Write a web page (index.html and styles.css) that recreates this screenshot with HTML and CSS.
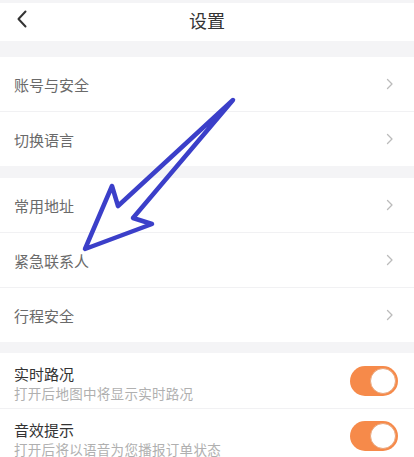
FILE: index.html
```html
<!DOCTYPE html>
<html lang="zh">
<head>
<meta charset="utf-8">
<title>设置</title>
<link rel="stylesheet" href="styles.css">
</head>
<body>
<div class="page">
  <header class="header">
    <svg class="back" width="12" height="18" viewBox="0 0 12 18"><path d="M9.5 1.5 L2.5 9 L9.5 16.5" fill="none" stroke="#333" stroke-width="2" stroke-linecap="round" stroke-linejoin="round"/></svg>
    <h1 class="title">设置</h1>
  </header>

  <section class="group g1">
    <div class="row"><span class="label">账号与安全</span><svg class="chev" width="8" height="12" viewBox="0 0 8 12"><path d="M1.5 1.5 L6 6 L1.5 10.5" fill="none" stroke="#bbb" stroke-width="1.3" stroke-linecap="round" stroke-linejoin="round"/></svg></div>
    <div class="row"><span class="label">切换语言</span><svg class="chev" width="8" height="12" viewBox="0 0 8 12"><path d="M1.5 1.5 L6 6 L1.5 10.5" fill="none" stroke="#bbb" stroke-width="1.3" stroke-linecap="round" stroke-linejoin="round"/></svg></div>
  </section>

  <section class="group g2">
    <div class="row"><span class="label">常用地址</span><svg class="chev" width="8" height="12" viewBox="0 0 8 12"><path d="M1.5 1.5 L6 6 L1.5 10.5" fill="none" stroke="#bbb" stroke-width="1.3" stroke-linecap="round" stroke-linejoin="round"/></svg></div>
    <div class="row"><span class="label">紧急联系人</span><svg class="chev" width="8" height="12" viewBox="0 0 8 12"><path d="M1.5 1.5 L6 6 L1.5 10.5" fill="none" stroke="#bbb" stroke-width="1.3" stroke-linecap="round" stroke-linejoin="round"/></svg></div>
    <div class="row"><span class="label">行程安全</span><svg class="chev" width="8" height="12" viewBox="0 0 8 12"><path d="M1.5 1.5 L6 6 L1.5 10.5" fill="none" stroke="#bbb" stroke-width="1.3" stroke-linecap="round" stroke-linejoin="round"/></svg></div>
  </section>

  <section class="group g3">
    <div class="row trow">
      <div class="ttext">
        <div class="ttitle">实时路况</div>
        <div class="tsub">打开后地图中将显示实时路况</div>
      </div>
      <span class="toggle"><span class="knob"></span></span>
    </div>
    <div class="row trow">
      <div class="ttext">
        <div class="ttitle">音效提示</div>
        <div class="tsub">打开后将以语音为您播报订单状态</div>
      </div>
      <span class="toggle"><span class="knob"></span></span>
    </div>
  </section>

  <svg class="arrow" width="414" height="457" viewBox="0 0 414 457">
    <path d="M233 100 L118 206 L112 186 L85 249 L152 224 L133 218 Z" fill="none" stroke="#3b3fc9" stroke-width="4.5" stroke-linejoin="round" stroke-linecap="round"/>
  </svg>
</div>
</body>
</html>
```

FILE: styles.css
```css
html, body {
  margin: 0;
  padding: 0;
  background: #f4f4f6;
  font-family: "Noto Sans CJK SC", "Noto Sans", sans-serif;
}

.page {
  position: relative;
  width: 414px;
  height: 457px;
  overflow: hidden;
  padding-top: 3px;
  box-sizing: border-box;
}

.header {
  height: 38px;
  background: #fff;
  display: flex;
  align-items: center;
  justify-content: center;
  position: relative;
  padding-bottom: 5px;
  box-sizing: border-box;
}

.back {
  position: absolute;
  left: 16px;
  top: 7px;
}

.title {
  margin: 0;
  font-size: 18px;
  font-weight: 400;
  color: #333;
  line-height: 24px;
}

.group {
  background: #fff;
  display: flex;
  flex-direction: column;
}

.g1 { margin-top: 16px; }
.g2 { margin-top: 12px; }
.g3 { margin-top: 11px; }

.row {
  height: 54px;
  display: flex;
  align-items: center;
  justify-content: space-between;
  padding: 0 20px 0 14px;
  box-sizing: border-box;
}

.row + .row {
  border-top: 1px solid #f1f1f3;
  height: 55px;
}

.label {
  font-size: 15px;
  color: #6a6a6a;
}

.trow {
  height: 55px;
  padding-right: 16px;
}

.ttext {
  display: flex;
  flex-direction: column;
  align-self: flex-start;
  margin-top: 11px;
}

.ttitle {
  font-size: 15px;
  line-height: 20px;
  color: #333;
}

.tsub {
  font-size: 13.5px;
  line-height: 16px;
  margin-top: 1px;
  color: #b0b0b0;
  letter-spacing: 0.3px;
}

.toggle {
  width: 48px;
  height: 30px;
  border-radius: 15px;
  background: #f68a4a;
  display: flex;
  align-items: center;
  justify-content: flex-end;
  padding: 0 2px;
  box-sizing: border-box;
}

.knob {
  width: 26px;
  height: 26px;
  border-radius: 50%;
  background: #fff;
  box-sizing: border-box;
  border: 1px solid #e9a57a;
}

.arrow {
  position: absolute;
  left: 0;
  top: 0;
  pointer-events: none;
}
```
